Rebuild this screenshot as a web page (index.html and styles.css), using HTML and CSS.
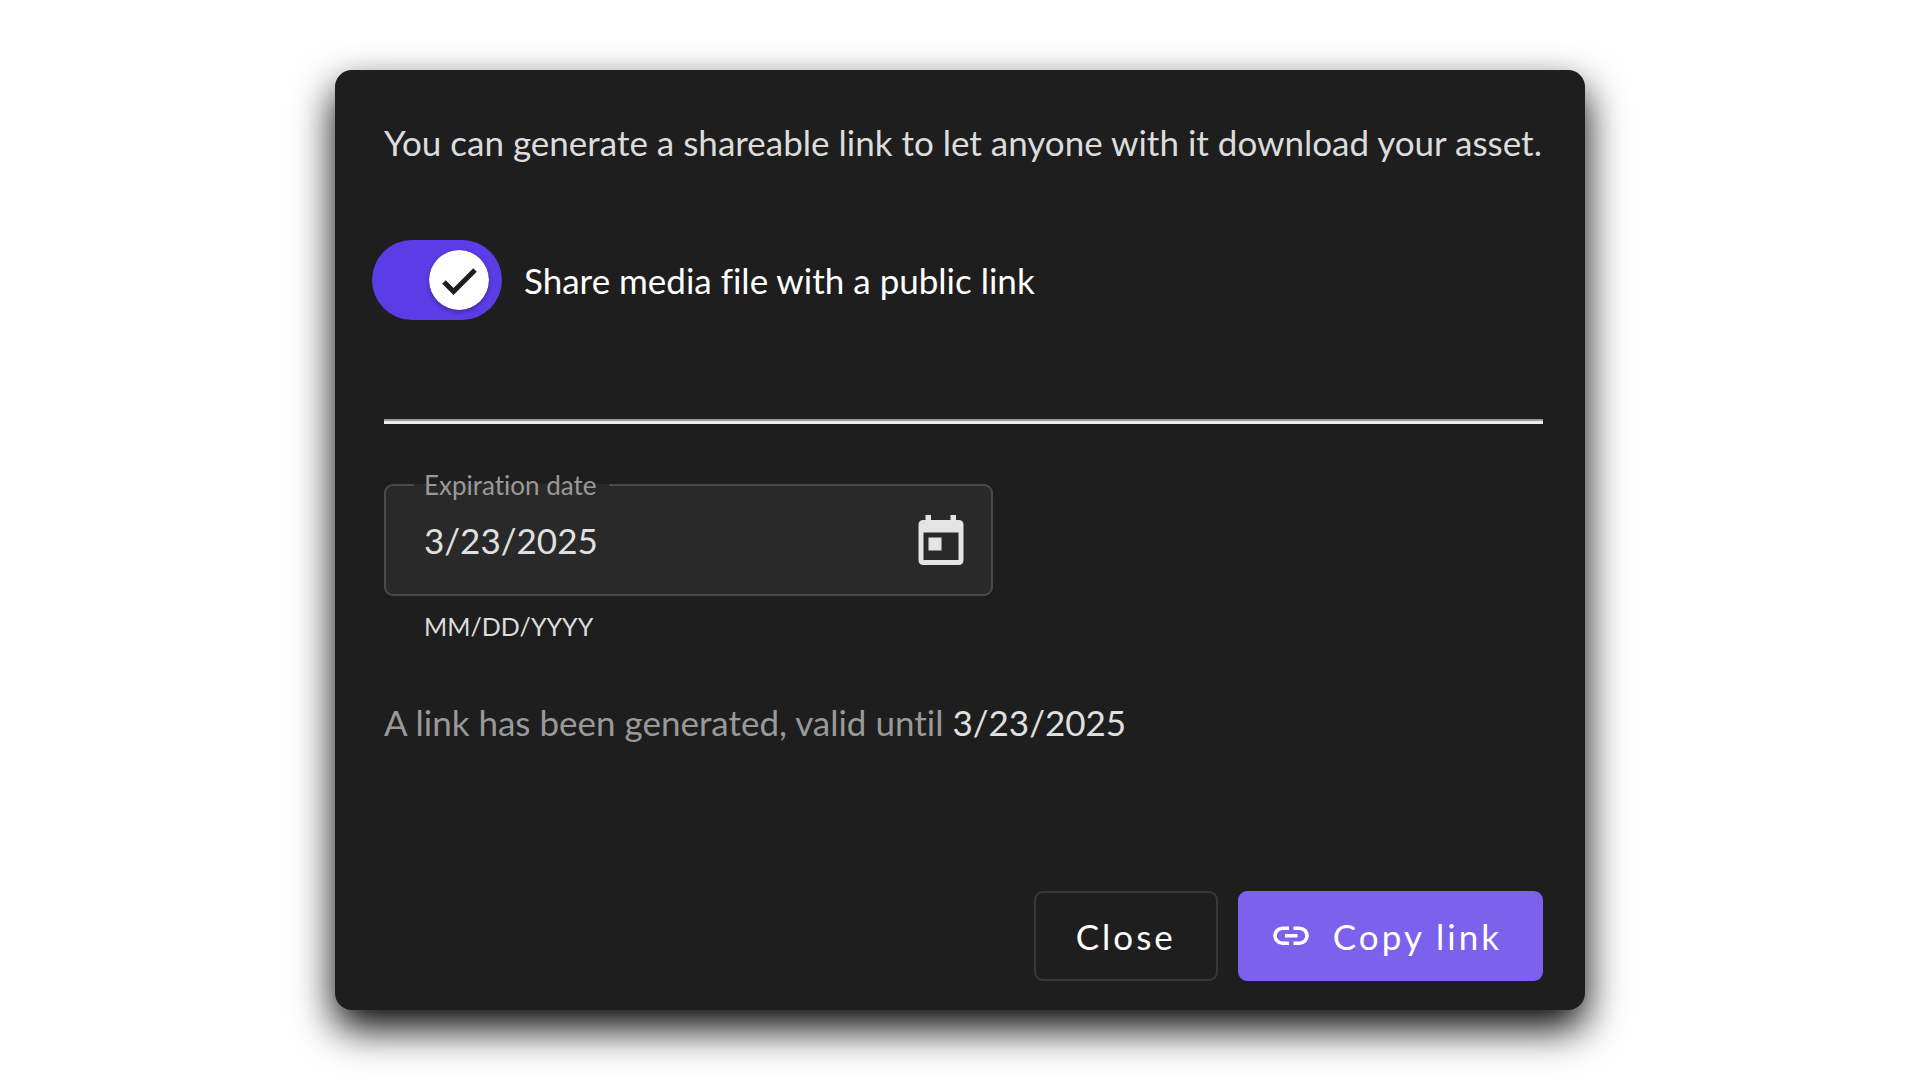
FILE: index.html
```html
<!DOCTYPE html>
<html lang="en">
<head>
    <meta charset="UTF-8">
    <meta name="viewport" content="width=device-width, initial-scale=1.0">
    <title>Share link</title>
    <link rel="stylesheet" href="styles.css">
</head>
<body>
    <main class="dialog" role="dialog" aria-labelledby="intro">
        <p class="intro" id="intro">You can generate a shareable link to let anyone with it download your asset.</p>

        <div class="share-row">
            <div class="switch">
                <input type="checkbox" class="switch-input" id="share" role="switch" checked>
                <svg class="switch-knob" viewBox="0 0 60 60" aria-hidden="true">
                    <circle cx="30" cy="30" r="30" fill="#fff"/>
                    <path d="M15 32L24.500 41.500L46 20" fill="none" stroke="#1e1e1e" stroke-width="5"/>
                </svg>
            </div>
            <label class="share-label" for="share">Share media file with a public link</label>
        </div>

        <hr class="divider">

        <fieldset class="date-field">
            <legend class="date-legend"><label for="expiration">Expiration date</label></legend>
            <div class="date-row">
                <input type="text" class="date-input" id="expiration" value="3/23/2025" aria-describedby="date-hint">
                <button type="button" class="date-button" aria-label="Open calendar">
                    <svg viewBox="0 0 46 50" width="46" height="50" aria-hidden="true">
                        <path fill="#e4e4e4" fill-rule="evenodd" d="M7.500 0H13V5H32.500V0H38V5H40.500Q45.500 5 45.500 10V45Q45.500 50 40.500 50H5.500Q.5 50 .5 45V10Q.5 5 5.500 5H7.500ZM5.500 17.500V45H40.500V17.500ZM10.500 22.500H23.500V35.500H10.500Z"/>
                    </svg>
                </button>
            </div>
        </fieldset>
        <p class="hint" id="date-hint">MM/DD/YYYY</p>

        <p class="status">A link has been generated, valid until <span class="status-date">3/23/2025</span></p>

        <div class="actions">
            <button type="button" class="button">Close</button>
            <button type="button" class="button button-primary">
                <svg viewBox="0 0 36 20" width="36" height="20" fill="none" stroke="#fff" stroke-width="3.600" aria-hidden="true">
                    <path d="M16 2.200H9.500A7.500 7.500 0 0 0 9.500 17.200H16M20.500 2.200H26.500A7.500 7.500 0 0 1 26.500 17.200H20.500M12 9.700H24.500"/>
                </svg>
                Copy link
            </button>
        </div>
    </main>
</body>
</html>
```
FILE: styles.css
```css
* {
    box-sizing: border-box;
}

body {
    margin: 0;
    min-height: 100vh;
    display: flex;
    justify-content: center;
    align-items: center;
    background-color: #fff;
    font-family: Lato, sans-serif;
    font-size: 35px;
    line-height: 44px;
    font-variant-ligatures: none;
    color: #dcdcdc;
}

p {
    margin: 0;
}

.dialog {
    width: 100%;
    max-width: 1250px;
    padding: 50px 42px 29px 49px;
    background-color: #1e1e1e;
    border-radius: 17px;
    box-shadow: 0 18px 40px #000;
}

/* Toggle */
.share-row {
    display: flex;
    align-items: center;
    gap: 22px;
    margin: 76px 0 99px -12px;
}

.switch {
    position: relative;
    width: 130px;
    height: 80px;
}

.switch-input {
    appearance: none;
    display: block;
    width: 100%;
    height: 100%;
    margin: 0;
    border-radius: 40px;
    background-color: #5a3de5;
    cursor: pointer;
}

/* Knob sits over the track */
.switch-knob {
    position: absolute;
    top: 10px;
    right: 13px;
    width: 60px;
    height: 60px;
    border-radius: 50%;
    box-shadow: 0 2px 4px rgba(0, 0, 0, 0.3);
    pointer-events: none;
}

.share-label {
    color: #fff;
}

.divider {
    margin: 0 0 45px;
    border: 0;
    border-top: 2px solid #9a9a9a;
    border-bottom: 3px solid #eee;
}

/* Date field */
.date-field {
    max-width: 609px;
    margin: 0;
    padding: 0 27px 0 28px;
    border: 2px solid #4a4a4a;
    border-radius: 9px;
    background-color: #292929;
}

.date-legend {
    padding: 0 12px 0 10px;
    font-size: 26px;
    line-height: 32px;
    color: #999;
}

.date-row {
    display: flex;
    align-items: center;
    justify-content: space-between;
    padding: 14px 0 29px 10px;
}

.date-input {
    flex: 1;
    min-width: 0;
    padding: 0;
    border: 0;
    background: none;
    font: inherit;
    color: #e0e0e0;
    outline: none;
}

.date-button {
    display: flex;
    padding: 0;
    border: 0;
    background: none;
    cursor: pointer;
}

.hint {
    margin: 14px 40px 0;
    font-size: 25px;
    line-height: 32px;
}

.status {
    margin-top: 58px;
    color: #999;
}

.status-date {
    color: #e0e0e0;
}

/* Footer buttons */
.actions {
    display: flex;
    justify-content: flex-end;
    gap: 20px;
    margin-top: 147px;
}

.button {
    display: flex;
    align-items: center;
    gap: 24px;
    height: 90px;
    padding: 0 40px;
    border: 2px solid #383838;
    border-radius: 9px;
    background: none;
    font: inherit;
    letter-spacing: 3px;
    color: #fff;
    cursor: pointer;
}

.button-primary {
    padding: 0 39px 0 33px;
    border-color: #7b61eb;
    background-color: #7b61eb;
}
```
